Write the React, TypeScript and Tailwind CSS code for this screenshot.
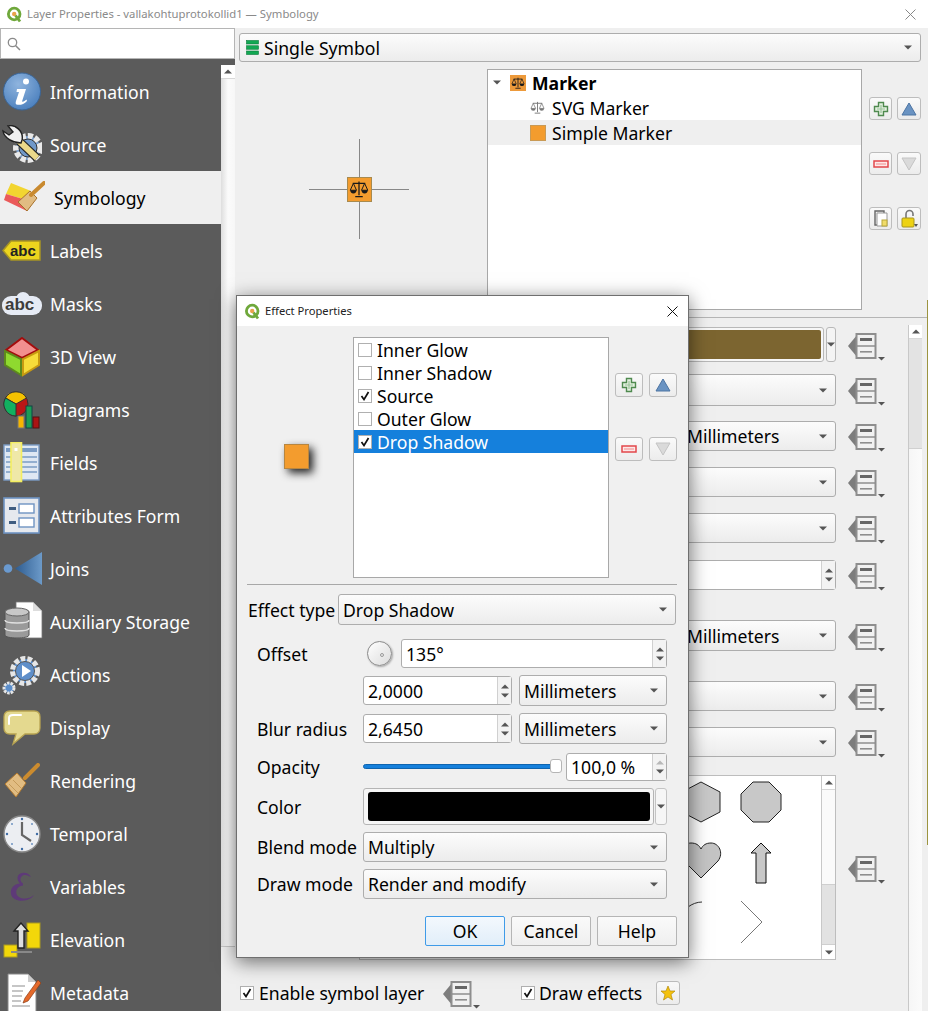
import React from "react";

const Arrow = ({ up = false, dim = false }: { up?: boolean; dim?: boolean }) => (
  <svg width="8" height="5" viewBox="0 0 8 5" className="shrink-0">
    <path d={up ? "M4 0.5L8 4.5H0Z" : "M0 0.5H8L4 4.5Z"} fill={dim ? "#b8b8b8" : "#555"} />
  </svg>
);

const Combo = ({ className = "", children }: { className?: string; children?: React.ReactNode }) => (
  <div className={`flex items-center justify-between pl-[4px] pr-[8px] border border-[#adadad] rounded-[3px] bg-linear-to-b from-[#fcfcfc] to-[#ececec] ${className}`}>
    <span className="whitespace-nowrap flex items-center">{children}</span>
    <Arrow />
  </div>
);

const Spin = ({ className = "", children, dimUp = false }: { className?: string; children?: React.ReactNode; dimUp?: boolean }) => (
  <div className={`flex items-stretch border border-[#adadad] rounded-[3px] bg-white ${className}`}>
    <span className="flex-1 flex items-center pl-[4px] whitespace-nowrap">{children}</span>
    <span className="w-[14px] border-l border-[#d0d0d0] bg-[#f3f3f3] flex flex-col items-center justify-center gap-[4px]">
      <Arrow up dim={dimUp} />
      <Arrow />
    </span>
  </div>
);

const Check = ({ on = false, className = "" }: { on?: boolean; className?: string }) => (
  <span className={`w-[14px] h-[14px] border border-[#b0b0b0] bg-white flex items-center justify-center shrink-0 ${className}`}>
    {on && (
      <svg width="10" height="10" viewBox="0 0 10 10">
        <path d="M1.5 5L4 8.5L8.5 1" fill="none" stroke="#111" strokeWidth="1.7" />
      </svg>
    )}
  </span>
);

const ToolBtn = ({ className = "", children }: { className?: string; children: React.ReactNode }) => (
  <div className={`flex items-center justify-center border border-[#bdbdbd] rounded-[3px] bg-linear-to-b from-[#fafafa] to-[#ececec] ${className}`}>{children}</div>
);

const Plus = () => (
  <svg width="16" height="16" viewBox="0 0 16 16">
    <path d="M5.5 1.5H10.5V5.5H14.5V10.5H10.5V14.5H5.5V10.5H1.5V5.5H5.5Z" fill="#e3f0df" stroke="#4f8a4f" strokeWidth="1.4" />
    <path d="M8 4V12M4 8H12" stroke="#9cc49c" strokeWidth="1.2" />
  </svg>
);
const Minus = () => (
  <svg width="16" height="8" viewBox="0 0 16 8">
    <rect x="1" y="1" width="14" height="6" fill="#fde8e8" stroke="#e2474b" strokeWidth="1.5" />
    <rect x="3" y="3" width="10" height="2" fill="#f7b9b9" />
  </svg>
);
const Up = () => (
  <svg width="16" height="14" viewBox="0 0 16 14">
    <path d="M8 1L15 13H1Z" fill="#6a93c2" stroke="#4c74a3" />
  </svg>
);
const Down = () => (
  <svg width="16" height="14" viewBox="0 0 16 14">
    <path d="M1 1H15L8 13Z" fill="#dadada" stroke="#c4c4c4" />
  </svg>
);

const DD = () => (
  <svg width="38" height="28" viewBox="0 -2 38 28" className="shrink-0 overflow-visible">
    <path d="M9 2L0 13L9 24Z" fill="#7d7d7d" />
    <rect x="8.5" y="1" width="19" height="24" fill="#f1f1f1" stroke="#8e8e8e" strokeWidth="2" />
    <path d="M8 13H28" stroke="#8e8e8e" strokeWidth="1.5" />
    <rect x="12" y="5" width="12" height="3" fill="#666" />
    <rect x="12" y="18" width="12" height="1.6" fill="#8e8e8e" />
    <path d="M30 24H37L33.5 27.5Z" fill="#555" />
  </svg>
);

const QLogo = () => (
  <svg width="17" height="17" viewBox="0 0 17 17" className="shrink-0">
    <circle cx="8.2" cy="8" r="5.8" fill="#fff" stroke="#6fa83b" strokeWidth="2.8" />
    <circle cx="8.2" cy="8" r="2.2" fill="#e9a24b" />
    <path d="M9.5 9.5L14 15.5" stroke="#6fa83b" strokeWidth="2.8" />
  </svg>
);

const Scales = ({ size = 16, color = "#1a1a1a" }: { size?: number; color?: string }) => (
  <svg width={size} height={size} viewBox="0 0 16 16">
    <path d="M8 2V13M3 3.5H13M5 14H11" stroke={color} strokeWidth="1" fill="none" />
    <path d="M3.5 3.5L1 9H6ZM12.5 3.5L10 9H15Z" fill="none" stroke={color} strokeWidth="0.8" />
    <path d="M1 9A2.5 2.5 0 0 0 6 9ZM10 9A2.5 2.5 0 0 0 15 9Z" fill={color} />
  </svg>
);

const icons: Record<string, React.ReactNode> = {
  Information: (
    <svg width="40" height="40" viewBox="0 0 40 40">
      <defs>
        <radialGradient id="ig" cx="40%" cy="30%" r="75%">
          <stop offset="0" stopColor="#8fb4de" />
          <stop offset="1" stopColor="#4a7fbd" />
        </radialGradient>
      </defs>
      <circle cx="20" cy="19.5" r="18.5" fill="url(#ig)" stroke="#3a6597" />
      <circle cx="24" cy="9.5" r="3" fill="#fff" />
      <path d="M15 17H24L20 29.5C21 30 23 29 24.5 27.5L25 29C22 32.5 17.5 33.5 14.5 32.5C13.5 32 13.5 30.5 14 29L17 20H14.5Z" fill="#fff" />
    </svg>
  ),
  Source: (
    <svg width="40" height="40" viewBox="0 0 40 40">
      <circle cx="26" cy="23" r="12" fill="#7da2cf" stroke="#e9e9e9" strokeWidth="6" strokeDasharray="5 2" />
      <circle cx="26" cy="23" r="9" fill="#6f98c9" stroke="#333" strokeWidth="1" />
      <path d="M17 16L35 33" stroke="#222" strokeWidth="8.5" />
      <path d="M17 16L35 33" stroke="#ead98a" strokeWidth="6" />
      <path d="M19 18C11 18 2 13 1 6L7 10L11 7L6 1C13 -1 22 6 20 15Z" fill="#f0f0f0" stroke="#222" strokeWidth="1.4" />
    </svg>
  ),
  Symbology: (
    <svg width="42" height="34" viewBox="0 0 42 34">
      <path d="M3 13L8 2L28 10L20 18Z" fill="#f2d530" />
      <path d="M3 13L20 18L24 30L1 19Z" fill="#ea5a5a" />
      <path d="M15 21L27 10L34 17L24 30Z" fill="#e1bc82" stroke="#a7712c" />
      <path d="M28 14L41 2" stroke="#c98a2f" strokeWidth="4" strokeLinecap="round" />
    </svg>
  ),
  Labels: (
    <svg width="40" height="22" viewBox="0 0 40 22">
      <path d="M9 1H38V20H9L1 10.5Z" fill="#ecd51e" stroke="#a89524" strokeWidth="1.5" />
      <text x="8" y="15.5" fontFamily="Liberation Sans" fontWeight="700" fontSize="15" fill="#222">abc</text>
    </svg>
  ),
  Masks: (
    <svg width="42" height="26" viewBox="0 0 42 26">
      <rect x="1" y="5" width="40" height="19" rx="9" fill="#e6ebf5" />
      <circle cx="22" cy="8" r="7" fill="#e6ebf5" />
      <text x="4" y="19" fontFamily="Liberation Sans" fontWeight="700" fontSize="17" fill="#3d3d3d">abc</text>
    </svg>
  ),
  "3D View": (
    <svg width="38" height="40" viewBox="0 0 38 40">
      <path d="M19 1L35 13L19 21L3 13Z" fill="#f28f8f" stroke="#a30d0d" strokeWidth="2" />
      <path d="M2 14L18 22V38L2 28Z" fill="#8fd92f" stroke="#5d8a1d" strokeWidth="2" />
      <path d="M36 14L20 22V38L36 28Z" fill="#f6dc3a" stroke="#c79a12" strokeWidth="2" />
    </svg>
  ),
  Diagrams: (
    <svg width="38" height="38" viewBox="0 0 38 38">
      <circle cx="13" cy="13" r="12" fill="#ba1616" stroke="#333" />
      <path d="M13 13L2.5 7A12 12 0 0 1 23.5 7Z" fill="#f5c200" stroke="#333" />
      <path d="M13 13V25A12 12 0 0 1 2.5 7Z" fill="#12b060" stroke="#333" />
      <rect x="15" y="25" width="6" height="12" fill="#f5b500" stroke="#777" />
      <rect x="23" y="15" width="6" height="22" fill="#1a9c55" stroke="#144" />
      <rect x="30" y="26" width="6" height="11" fill="#aa1414" stroke="#511" />
    </svg>
  ),
  Fields: (
    <svg width="38" height="41" viewBox="0 0 38 41">
      <rect x="1" y="3" width="35" height="35" fill="#dfe8f3" stroke="#7b9cc5" strokeWidth="1.4" />
      <rect x="3" y="6" width="31" height="4" fill="#7b9cc5" />
      <path d="M3 15H34M3 20H34M3 25H34M3 30H34" stroke="#7b9cc5" strokeWidth="1.4" />
      <rect x="8" y="0.5" width="10.5" height="39" fill="#efe8a8" stroke="#f4ee60" strokeWidth="1.6" />
      <rect x="11.5" y="6" width="3" height="3" fill="#fff" />
    </svg>
  ),
  "Attributes Form": (
    <svg width="38" height="38" viewBox="0 0 38 38">
      <rect x="1" y="1" width="35" height="35" fill="#e6e9ee" stroke="#6e93c2" strokeWidth="1.6" />
      <rect x="6" y="10" width="7" height="3" fill="#3f5d80" />
      <rect x="6" y="24" width="7" height="3" fill="#3f5d80" />
      <rect x="16" y="7" width="15" height="9" fill="#fff" stroke="#6e93c2" strokeWidth="1.4" />
      <rect x="16" y="21" width="15" height="9" fill="#fff" stroke="#6e93c2" strokeWidth="1.4" />
    </svg>
  ),
  Joins: (
    <svg width="42" height="36" viewBox="0 0 42 36">
      <defs>
        <linearGradient id="jg" x1="0" x2="1" y1="0" y2="0">
          <stop offset="0" stopColor="#2e5c90" />
          <stop offset="1" stopColor="#6c9ac9" />
        </linearGradient>
      </defs>
      <circle cx="7" cy="17.5" r="4.3" fill="#6a9ad0" />
      <path d="M14 17.5L41 1V34Z" fill="url(#jg)" />
    </svg>
  ),
  "Auxiliary Storage": (
    <svg width="41" height="41" viewBox="0 0 41 41">
      <path d="M14 1H31L40 10V37H14Z" fill="#fff" stroke="#777" strokeWidth="0.8" />
      <path d="M31 1V10H40Z" fill="#ddd" />
      <path d="M3 11C3 7 27 7 27 11V34C27 38 3 38 3 34Z" fill="#9a9a9a" stroke="#555" />
      <ellipse cx="15" cy="11" rx="12" ry="4" fill="#c8c8c8" stroke="#666" />
      <path d="M3 19C3 23 27 23 27 19M3 27C3 31 27 31 27 27" stroke="#e0e0e0" strokeWidth="1.5" fill="none" />
    </svg>
  ),
  Actions: (
    <svg width="42" height="42" viewBox="0 0 42 42">
      <circle cx="24" cy="17" r="12" fill="#5b8ecb" stroke="#e6e6e6" strokeWidth="6" strokeDasharray="4.5 2" />
      <circle cx="24" cy="17" r="9.5" fill="#5f8fca" stroke="#555" />
      <path d="M21 11L30 17L21 23Z" fill="#fff" />
      <circle cx="8" cy="34" r="5" fill="#5b8ecb" stroke="#e6e6e6" strokeWidth="3" strokeDasharray="2.5 1" />
    </svg>
  ),
  Display: (
    <svg width="38" height="36" viewBox="0 0 38 36">
      <path d="M7 1H31C35 1 37 3 37 7V18C37 22 34 24 31 24H22L10 34L13 24H7C3 24 1 22 1 18V7C1 3 3 1 7 1Z" fill="#e4d98f" stroke="#b8a452" strokeWidth="1.3" />
      <path d="M6 14V8C6 6 8 5 10 5H18" fill="none" stroke="#fff" strokeWidth="2" strokeLinecap="round" />
    </svg>
  ),
  Rendering: (
    <svg width="36" height="36" viewBox="0 0 36 36">
      <path d="M1 21L13 10L22 20L12 34Z" fill="#e1bc82" stroke="#b37a2f" />
      <path d="M5 21L14 30M9 17L18 26" stroke="#c49a5a" />
      <path d="M21 15L34 2" stroke="#cb8b2e" strokeWidth="4" strokeLinecap="round" />
    </svg>
  ),
  Temporal: (
    <svg width="38" height="38" viewBox="0 0 38 38">
      <circle cx="19" cy="19" r="18" fill="#eceef2" stroke="#8a8a8a" strokeWidth="1.4" />
      <circle cx="19" cy="4" r="1.2" fill="#3f6ca5" /><circle cx="19" cy="34" r="1.2" fill="#3f6ca5" />
      <circle cx="4" cy="19" r="1.2" fill="#3f6ca5" /><circle cx="34" cy="19" r="1.2" fill="#3f6ca5" />
      <circle cx="9" cy="9" r="1" fill="#6f93c0" /><circle cx="29" cy="9" r="1" fill="#6f93c0" />
      <circle cx="9" cy="29" r="1" fill="#6f93c0" /><circle cx="29" cy="29" r="1" fill="#6f93c0" />
      <path d="M19 7V20L28 26" fill="none" stroke="#666" strokeWidth="2.2" />
    </svg>
  ),
  Variables: (
    <svg width="26" height="32" viewBox="0 0 26 32">
      <path d="M22 6C20 2 16 1 13 2C8 3 7 8 11 12.5C5 13 1 17 2 23C3 29 11 31 18 29C21 28 24 26 25 24C22 27 15 29 10 26C5 23 7 15 14 14.5V12.5C10 10 11 5 15 4C18 3.5 20 5 22 6Z" fill="#5e3a78" />
    </svg>
  ),
  Elevation: (
    <svg width="38" height="40" viewBox="0 0 38 40">
      <rect x="24" y="3" width="13" height="25" fill="#f2d70a" stroke="#a99a20" />
      <rect x="1" y="25" width="13" height="12" fill="#f2d70a" stroke="#a99a20" />
      <path d="M18 3L11 11H15V28H21V11H25Z" fill="#ddd" stroke="#222" strokeWidth="1.4" />
      <path d="M8 31H29V33H8Z" fill="#888" />
    </svg>
  ),
  Metadata: (
    <svg width="38" height="40" viewBox="0 0 38 40">
      <path d="M5 1H25L33 9V40H5Z" fill="#fff" stroke="#888" />
      <path d="M25 1V9H33Z" fill="#ccc" />
      <path d="M9 13H22M9 18H20M9 23H19M9 28H18M9 33H27" stroke="#8d8d8d" strokeWidth="1.2" />
      <path d="M35 7L22 25L20 30L25 28L38 10Z" fill="#e5692a" stroke="#8a3d17" strokeWidth="0.7" />
    </svg>
  ),
};

const tabs = ["Information", "Source", "Symbology", "Labels", "Masks", "3D View", "Diagrams", "Fields", "Attributes Form", "Joins", "Auxiliary Storage", "Actions", "Display", "Rendering", "Temporal", "Variables", "Elevation", "Metadata"];

const Sidebar = () => (
  <div className="w-[236px] shrink-0 flex flex-col h-[983px]">
    <div className="h-[31px] w-[235px] shrink-0 bg-white border border-[#b5b5b5] flex items-center pl-[6px]">
      <svg width="14" height="14" viewBox="0 0 14 14">
        <circle cx="5.5" cy="5.5" r="4.2" fill="none" stroke="#8a8a8a" strokeWidth="1.3" />
        <path d="M8.5 8.5L13 13" stroke="#8a8a8a" strokeWidth="1.5" />
      </svg>
    </div>
    <div className="flex-1 flex min-h-0">
      <div className="w-[221px] bg-[#5b5b5b] pt-[6px] flex flex-col overflow-hidden">
        {tabs.map((t) => {
          const sel = t === "Symbology";
          return (
            <div key={t} className={`h-[53px] shrink-0 flex items-center ${sel ? "bg-[#efefef] text-black" : "text-white"}`}>
              <span className={`flex items-center justify-center shrink-0 ${sel ? "w-[54px] pr-[6px]" : "w-[50px] pr-[6px]"}`}>{icons[t]}</span>
              <span className="whitespace-nowrap">{t}</span>
            </div>
          );
        })}
      </div>
      <div className="w-[14px] flex flex-col">
        <div className="h-[6px] bg-[#5b5b5b]" />
        <div className="h-[882px] flex flex-col border-b border-[#c8c8c8] bg-linear-to-r from-[#dedede] via-[#fbfbfb] to-[#f7f7f7]">
          <div className="h-[14px] bg-white border-b border-[#d8d8d8] flex items-center justify-center"><Arrow up /></div>
        </div>
      </div>
    </div>
  </div>
);

const PropRow = ({ className = "", children }: { className?: string; children: React.ReactNode }) => (
  <div className={`flex items-center justify-end gap-[12px] pr-[22px] ${className}`}>
    {children}
    <DD />
  </div>
);

const Shape = ({ children }: { children: React.ReactNode }) => (
  <div className="w-[60px] h-[60px] flex items-center justify-center">
    <svg width="44" height="44" viewBox="0 0 44 44">{children}</svg>
  </div>
);

const Properties = () => (
  <div className="flex-1 flex min-h-0 mt-[7px] border-t border-[#b5b5b5]">
    <div className="flex-1 min-w-0 flex flex-col pt-[9px]">
      <PropRow>
        <div className="flex gap-[2px] h-[35px]">
          <div className="w-[465px] border border-[#b8b8b8] rounded-[3px] p-[2px] bg-[#f7f7f7]">
            <div className="w-full h-full rounded-[2px] bg-[#7c6530]" />
          </div>
          <div className="w-[10px] border border-[#b8b8b8] rounded-[3px] flex items-center justify-center bg-[#f4f4f4]"><Arrow /></div>
        </div>
      </PropRow>
      <PropRow className="mt-[12px]"><Combo className="w-[477px] h-[32px]" /></PropRow>
      <PropRow className="mt-[15px]"><Combo className="w-[154px] h-[30px]">Millimeters</Combo></PropRow>
      <PropRow className="mt-[16px]"><Combo className="w-[477px] h-[30px]" /></PropRow>
      <PropRow className="mt-[16px]"><Combo className="w-[477px] h-[30px]" /></PropRow>
      <PropRow className="mt-[17px]"><Spin className="w-[477px] h-[30px]" /></PropRow>
      <PropRow className="mt-[30px]"><Combo className="w-[154px] h-[31px]">Millimeters</Combo></PropRow>
      <PropRow className="mt-[30px]"><Combo className="w-[477px] h-[30px]" /></PropRow>
      <PropRow className="mt-[16px]"><Combo className="w-[477px] h-[30px]" /></PropRow>
      <PropRow className="mt-[18px]">
        <div className="w-[477px] h-[185px] flex border border-[#bdbdbd] bg-white">
          <div className="flex-1 flex flex-col items-end pr-[30px] overflow-hidden">
            <div className="w-[120px] flex flex-wrap -mt-[4px]">
              <Shape><path d="M22 2L41 12V32L22 42L3 32V12Z" fill="#c8c8c8" stroke="#222" /></Shape>
              <Shape><path d="M14 2H30L42 14V30L30 42H14L2 30V14Z" fill="#c8c8c8" stroke="#222" /></Shape>
              <Shape><path d="M22 38L5 21C-1 13 4 3 12 3C17 3 20 5 22 9C24 5 27 3 32 3C40 3 45 13 39 21Z" fill="#c4c4c4" stroke="#222" /></Shape>
              <Shape><path d="M22 3L32 13H27V43H17V13H12Z" fill="#c8c8c8" stroke="#111" /></Shape>
              <Shape><path d="M23 2C18 2 13 4 9 7" fill="none" stroke="#333" /></Shape>
              <Shape><path d="M2 1L23 22L2 43" fill="none" stroke="#777" /></Shape>
            </div>
          </div>
          <div className="w-[14px] border-l border-[#c8c8c8] flex flex-col bg-[#fafafa]">
            <div className="h-[14px] flex items-center justify-center border-b border-[#d8d8d8] bg-white"><Arrow up /></div>
            <div className="flex-1" />
            <div className="h-[61px] bg-[#e2e2e2] border-y border-[#cfcfcf]" />
            <div className="h-[14px] flex items-center justify-center bg-white"><Arrow /></div>
          </div>
        </div>
      </PropRow>
      <div className="flex items-center mt-[19px] pl-[4px]">
        <Check on />
        <span className="ml-[5px] w-[184px] whitespace-nowrap">Enable symbol layer</span>
        <DD />
        <span className="w-[40px]" />
        <Check on />
        <span className="ml-[4px] w-[117px] whitespace-nowrap">Draw effects</span>
        <ToolBtn className="w-[24px] h-[24px]">
          <svg width="16" height="16" viewBox="0 0 16 16">
            <path d="M8 1L10 6H15L11 9.5L12.5 15L8 12L3.5 15L5 9.5L1 6H6Z" fill="#f4c20d" stroke="#b58a0a" strokeWidth="0.7" />
          </svg>
        </ToolBtn>
      </div>
    </div>
    <div className="w-[14px] flex flex-col border-l border-[#c8c8c8] bg-linear-to-r from-[#f6f6f6] to-[#fbfbfb] mt-[7px]">
      <div className="h-[14px] flex items-center justify-center bg-white border-b border-[#d8d8d8]"><Arrow up /></div>
      <div className="h-[110px] bg-[#e3e3e3] border-b border-[#d0d0d0]" />
    </div>
    <div className="w-[6px]" />
  </div>
);

const Top = () => (
  <div className="flex pl-[3px] pt-[7px] pr-[7px]">
    <div className="w-[248px] shrink-0 pt-[70px] pl-[70px]">
      <div className="w-[100px] h-[100px] flex items-center justify-center bg-[linear-gradient(#888,#888),linear-gradient(#888,#888)] bg-[length:100%_1px,1px_100%] bg-center bg-no-repeat">
        <div className="w-[25px] h-[25px] bg-[#f39c2e] border border-[#a88a4e] flex items-center justify-center">
          <Scales size={20} />
        </div>
      </div>
    </div>
    <div className="w-[375px] h-[241px] shrink-0 bg-white border border-[#a8a8a8] flex flex-col">
      <div className="h-[25px] flex items-center">
        <span className="ml-[5px] flex"><Arrow /></span>
        <span className="ml-[9px] w-[16px] h-[16px] bg-[#ed9a3b] flex items-center justify-center"><Scales size={14} /></span>
        <span className="ml-[6px] font-bold">Marker</span>
      </div>
      <div className="h-[25px] flex items-center pl-[42px]">
        <Scales size={15} color="#777" />
        <span className="ml-[7px]">SVG Marker</span>
      </div>
      <div className="h-[25px] flex items-center pl-[42px] bg-[#efefef]">
        <span className="w-[16px] h-[16px] bg-[#f39c2e] border border-[#c99a55]" />
        <span className="ml-[6px]">Simple Marker</span>
      </div>
    </div>
    <div className="flex-1 pt-[28px] pl-[7px] flex flex-col">
      <div className="flex gap-[5px]">
        <ToolBtn className="w-[23px] h-[23px]"><Plus /></ToolBtn>
        <ToolBtn className="w-[24px] h-[23px]"><Up /></ToolBtn>
      </div>
      <div className="flex gap-[5px] mt-[32px]">
        <ToolBtn className="w-[23px] h-[23px]"><Minus /></ToolBtn>
        <ToolBtn className="w-[24px] h-[23px]"><Down /></ToolBtn>
      </div>
      <div className="flex gap-[5px] mt-[32px]">
        <ToolBtn className="w-[23px] h-[23px]">
          <svg width="16" height="17" viewBox="0 0 16 17">
            <path d="M2 1H11V15H2Z" fill="#eee" stroke="#666" strokeWidth="1.4" />
            <path d="M4 3H14V16H4Z" fill="#fff" stroke="#999" />
            <rect x="9" y="10" width="5" height="6" fill="#f0dc6a" stroke="#b9a73a" />
          </svg>
        </ToolBtn>
        <ToolBtn className="w-[24px] h-[23px]">
          <svg width="18" height="19" viewBox="0 0 18 19">
            <path d="M6 9V5A3.5 3.5 0 0 1 13 5V7" fill="none" stroke="#777" strokeWidth="1.6" />
            <rect x="2" y="9" width="12" height="9" rx="1" fill="#edd214" stroke="#a8951f" />
            <path d="M14 15H18L16 18Z" fill="#555" />
          </svg>
        </ToolBtn>
      </div>
    </div>
  </div>
);

const effects = [
  { t: "Inner Glow", on: false },
  { t: "Inner Shadow", on: false },
  { t: "Source", on: true },
  { t: "Outer Glow", on: false },
  { t: "Drop Shadow", on: true, sel: true },
];

const Label = ({ children }: { children: React.ReactNode }) => (
  <span className="w-[106px] shrink-0 whitespace-nowrap self-center">{children}</span>
);

const Dialog = () => (
  <div className="absolute left-[236px] top-[295px] w-[453px] h-[663px] bg-[#f0f0f0] border border-[#6f6f6f] shadow-[0_4px_18px_rgba(0,0,0,0.55)] flex flex-col">
    <div className="h-[30px] shrink-0 bg-white flex items-center pl-[7px]">
      <QLogo />
      <span className="ml-[4px] text-[11.2px] text-[#222]">Effect Properties</span>
      <svg width="11" height="11" viewBox="0 0 11 11" className="ml-auto mr-[10px]">
        <path d="M0.5 0.5L10.5 10.5M10.5 0.5L0.5 10.5" stroke="#111" />
      </svg>
    </div>
    <div className="flex pt-[11px]">
      <div className="w-[116px] shrink-0 pl-[47px] pt-[107px]">
        <div className="w-[25px] h-[25px] bg-[#f39c2e] border border-[#b8863f] shadow-[4px_4px_8px_rgba(0,0,0,0.85)]" />
      </div>
      <div className="w-[256px] h-[241px] shrink-0 bg-white border border-[#a8a8a8]">
        {effects.map((e) => (
          <div key={e.t} className={`h-[23px] flex items-center pl-[4px] ${e.sel ? "bg-[#1580dc] text-white" : ""}`}>
            <Check on={e.on} />
            <span className="ml-[5px]">{e.t}</span>
          </div>
        ))}
      </div>
      <div className="pl-[6px] pt-[36px] flex flex-col">
        <div className="flex gap-[6px]">
          <ToolBtn className="w-[28px] h-[24px]"><Plus /></ToolBtn>
          <ToolBtn className="w-[28px] h-[24px]"><Up /></ToolBtn>
        </div>
        <div className="flex gap-[6px] mt-[40px]">
          <ToolBtn className="w-[28px] h-[24px]"><Minus /></ToolBtn>
          <ToolBtn className="w-[28px] h-[24px]"><Down /></ToolBtn>
        </div>
      </div>
    </div>
    <div className="h-px bg-[#a8a8a8] ml-[10px] mr-[11px] mt-[6px]" />
    <div className="flex items-center mt-[9px] pl-[11px]">
      <span className="w-[90px] whitespace-nowrap">Effect type</span>
      <Combo className="w-[338px] h-[31px]">Drop Shadow</Combo>
    </div>
    <div className="flex flex-col pl-[20px] w-[430px]">
      <div className="flex items-center mt-[14px] h-[29px]">
        <span className="w-[110px] shrink-0">Offset</span>
        <span className="w-[25px] h-[25px] rounded-full border border-[#8a8a8a] bg-linear-to-br from-white to-[#dcdcdc] shadow-[1px_1px_2px_rgba(0,0,0,0.3)] flex items-center justify-center shrink-0">
          <span className="w-[4px] h-[4px] rounded-full border border-[#999] ml-[4px] mt-[3px]" />
        </span>
        <Spin className="ml-[9px] flex-1 h-[29px]">135°</Spin>
      </div>
      <div className="flex items-center mt-[7px]">
        <span className="w-[106px] shrink-0" />
        <Spin className="w-[149px] h-[29px]">2,0000</Spin>
        <Combo className="ml-[7px] flex-1 h-[31px]">Millimeters</Combo>
      </div>
      <div className="flex items-center mt-[7px]">
        <Label>Blur radius</Label>
        <Spin className="w-[149px] h-[29px]">2,6450</Spin>
        <Combo className="ml-[7px] flex-1 h-[31px]">Millimeters</Combo>
      </div>
      <div className="flex items-center mt-[9px]">
        <Label>Opacity</Label>
        <div className="w-[199px] flex items-center shrink-0 -mt-[2px]">
          <div className="flex-1 h-[5px] rounded-full bg-[#1580dc] border border-[#0f64ae]" />
          <div className="w-[12px] h-[14px] rounded-[3px] bg-white border border-[#b5b5b5] -ml-[6px]" />
        </div>
        <Spin className="ml-[4px] flex-1 h-[28px]" dimUp>100,0 %</Spin>
      </div>
      <div className="flex items-stretch mt-[7px] h-[37px]">
        <Label>Color</Label>
        <div className="flex-1 border border-[#b5b5b5] rounded-[3px] bg-[#f6f6f6] p-[3px] pl-[4px]">
          <div className="w-full h-full bg-black rounded-[3px]" />
        </div>
        <div className="w-[12px] ml-[1px] border border-[#c4c4c4] rounded-[3px] flex items-center justify-center bg-[#f6f6f6]"><Arrow /></div>
      </div>
      <div className="flex items-center mt-[7px]">
        <Label>Blend mode</Label>
        <Combo className="flex-1 h-[30px]">Multiply</Combo>
      </div>
      <div className="flex items-center mt-[7px]">
        <Label>Draw mode</Label>
        <Combo className="flex-1 h-[30px]">Render and modify</Combo>
      </div>
    </div>
    <div className="flex justify-end gap-[6px] pr-[11px] mt-[17px]">
      <div className="w-[80px] h-[30px] flex items-center justify-center border border-[#3f9be8] rounded-[2px] bg-linear-to-b from-[#f3f8fd] to-[#e1eef9]">OK</div>
      <div className="w-[80px] h-[30px] flex items-center justify-center border border-[#b5b5b5] rounded-[2px] bg-linear-to-b from-[#fafafa] to-[#efefef]">Cancel</div>
      <div className="w-[80px] h-[30px] flex items-center justify-center border border-[#b5b5b5] rounded-[2px] bg-linear-to-b from-[#fafafa] to-[#efefef]">Help</div>
    </div>
  </div>
);

export default function App() {
  return (
    <div className="relative w-[928px] h-[1011px] overflow-hidden bg-[#efefef] text-black flex flex-col font-['Noto_Sans',sans-serif] text-[17.6px] leading-[24px]">
      <div className="h-[28px] shrink-0 bg-white flex items-center pl-[6px] text-[11.3px] text-[#8a8a8a]">
        <QLogo />
        <span className="ml-[4px] whitespace-nowrap">Layer Properties - vallakohtuprotokollid1 — Symbology</span>
        <svg width="11" height="11" viewBox="0 0 11 11" className="ml-auto mr-[12px]">
          <path d="M0.5 0.5L10.5 10.5M10.5 0.5L0.5 10.5" stroke="#888" />
        </svg>
      </div>
      <div className="flex-1 flex min-h-0">
        <Sidebar />
        <div className="flex-1 min-w-0 flex flex-col">
          <div className="pl-[3px] pr-[7px] pt-[5px]">
            <Combo className="h-[29px]">
              <svg width="13" height="15" viewBox="0 0 13 15" className="mr-[5px] ml-[2px]">
                <rect x="0.5" y="0.5" width="12" height="3.5" fill="#12a853" stroke="#0b7a3b" strokeWidth="0.6" />
                <rect x="0.5" y="5.75" width="12" height="3.5" fill="#12a853" stroke="#0b7a3b" strokeWidth="0.6" />
                <rect x="0.5" y="11" width="12" height="3.5" fill="#12a853" stroke="#0b7a3b" strokeWidth="0.6" />
              </svg>
              Single Symbol
            </Combo>
          </div>
          <Top />
          <Properties />
        </div>
      </div>
      <div className="absolute right-0 top-[300px] w-px h-[545px] bg-[#9c9440]" />
      <Dialog />
    </div>
  );
}
